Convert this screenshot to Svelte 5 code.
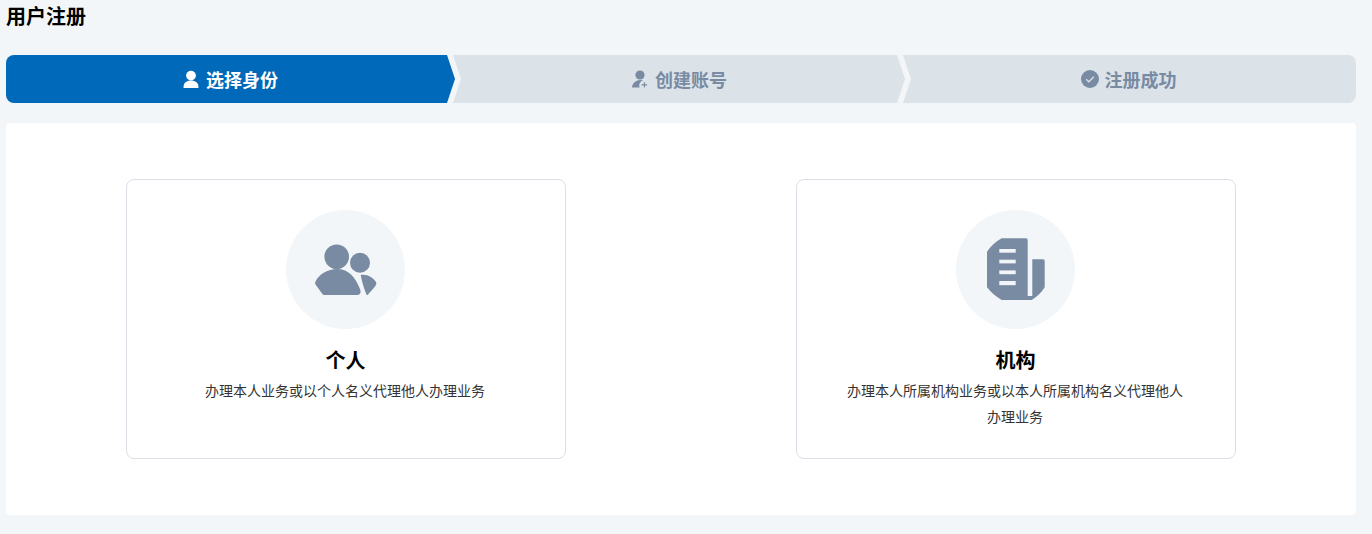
<script lang="ts">
	const cardText = {
		person: '办理本人业务或以个人名义代理他人办理业务',
		org: '办理本人所属机构业务或以本人所属机构名义代理他人办理业务'
	};
</script>

<div class="page">
	<h1>用户注册</h1>

	<div class="steps">
		<div class="step first active">
			<svg class="icon" width="16" height="18" viewBox="0 0 16 18" aria-hidden="true">
				<circle cx="8" cy="5.600" r="4.900" fill="currentColor" />
				<path d="M.5 17.200C.5 12.800 3.600 10.600 8 10.600s7.500 2.200 7.500 6.600c0 .6-.4 1-1 1h-13c-.6 0-1-.4-1-1z" fill="currentColor" />
			</svg>
			<span>选择身份</span>
		</div>
		<div class="step middle">
			<svg class="icon" width="16" height="18" viewBox="0 0 16 18" aria-hidden="true">
				<circle cx="8" cy="5" r="4.600" fill="currentColor" />
				<path d="M0 17.600c0-1.400.7-3.200 1.600-4.400C3 11.300 5.400 10 8.200 10c1.200 0 2.200.2 3.100.6-2.400.4-4.100 2.500-4.100 4.900 0 .8.2 1.500.5 2.100H0z" fill="currentColor" />
				<path d="M12.400 12.200v5.400M9.700 14.900h5.400" stroke="currentColor" stroke-width="1.100" fill="none" />
			</svg>
			<span>创建账号</span>
		</div>
		<div class="step last">
			<svg class="icon" width="18" height="18" viewBox="0 0 18 18" aria-hidden="true">
				<circle cx="9" cy="9" r="9" fill="currentColor" />
				<path d="M5.200 9.200l2.700 2.600 4.900-5" stroke="#dbe2e8" stroke-width="1.300" fill="none" />
			</svg>
			<span>注册成功</span>
		</div>
	</div>

	<div class="panel">
		<div class="card">
			<div class="circle">
				<svg width="120" height="120" viewBox="0 0 120 120" aria-hidden="true">
					<circle cx="50.700" cy="46.700" r="12.300" />
					<circle cx="74" cy="52.700" r="10" />
					<path d="M29.500 71.500C33 64 42 59 51 59 62 59 69 66 74 79 75.500 83 74 85 70 85H39C37.500 85 37 84.500 36 83.500L29.500 74.500Q28.700 73 29.500 71.500Z" />
					<path d="M74.700 65C82 64 87 68 90 72 90.500 73 90.500 74 90 75 87.500 79 84 82 82 84.500 81.500 85.200 81 85.200 80.500 84.500 78 79 76 72 74.700 65Z" />
				</svg>
			</div>
			<h2>个人</h2>
			<p>{cardText.person}</p>
		</div>

		<div class="card">
			<div class="circle">
				<svg width="120" height="120" viewBox="0 0 120 120" aria-hidden="true">
					<path d="M45.700 28.300H70Q71.700 28.300 71.700 30V86H76.300V49.300H87Q88.700 49.300 88.700 51V77.300Q84 85 75.700 90H45.700Q37 85 31 77.300V41.700Q37 33 45.700 28.300Z" />
					<rect class="line" x="43.300" y="39" width="16.400" height="3.700" />
					<rect class="line" x="43.300" y="49.700" width="16.400" height="3.700" />
					<rect class="line" x="43.300" y="60.400" width="16.400" height="3.800" />
					<rect class="line" x="43.300" y="71" width="16.400" height="4.200" />
				</svg>
			</div>
			<h2>机构</h2>
			<p>{cardText.org}</p>
		</div>
	</div>
</div>

<style>
	:global(body) {
		margin: 0;
		background: #f2f6f9;
		font-family: 'Noto Sans CJK SC', 'Liberation Sans', sans-serif;
	}

	.page {
		padding: 0 16px 19px 6px;
	}

	h1 {
		margin: 0 0 23px;
		font-size: 20px;
		line-height: 32px;
		font-weight: 700;
		color: #000;
	}

	.steps {
		display: flex;
		height: 48px;
	}

	.step {
		flex: 1;
		margin-left: -2px;
		display: flex;
		align-items: center;
		justify-content: center;
		gap: 7px;
		background: #dbe2e8;
		color: #788ba3;
		font-size: 18px;
		font-weight: 700;
	}

	.step.first {
		flex: none;
		width: 449px;
		margin-left: 0;
		border-radius: 8px 0 0 8px;
		clip-path: polygon(0 0, calc(100% - 8px) 0, 100% 50%, calc(100% - 8px) 100%, 0 100%);
	}

	.step.middle {
		padding-left: 1px;
		clip-path: polygon(0 0, calc(100% - 8px) 0, 100% 50%, calc(100% - 8px) 100%, 0 100%, 8px 50%);
	}

	.step.last {
		gap: 6px;
		padding-right: 2px;
		border-radius: 0 8px 8px 0;
		clip-path: polygon(0 0, 100% 0, 100% 100%, 0 100%, 8px 50%);
	}

	.step.active {
		background: #0069b9;
		color: #fff;
	}

	.icon {
		flex: none;
	}

	.panel {
		display: flex;
		justify-content: space-between;
		box-sizing: border-box;
		height: 392px;
		margin-top: 20px;
		padding: 56px 120px;
		background: #fff;
		border-radius: 4px;
	}

	.card {
		box-sizing: border-box;
		width: 440px;
		height: 280px;
		padding: 30px 50px 0 48px;
		border: 1px solid #dcdfe6;
		border-radius: 8px;
		text-align: center;
	}

	.circle {
		width: 119px;
		height: 119px;
		margin: 0 0 0 111px;
		border-radius: 50%;
		background: #f2f6f9;
	}

	.circle svg {
		display: block;
		fill: #788ba3;
	}

	.circle .line {
		fill: #f2f6f9;
	}

	h2 {
		margin: 17px 0 3px;
		padding-left: 1px;
		font-size: 20px;
		line-height: 28px;
		font-weight: 700;
		color: #000;
	}

	p {
		margin: 0;
		font-size: 14px;
		line-height: 26px;
		color: #333;
	}
</style>
